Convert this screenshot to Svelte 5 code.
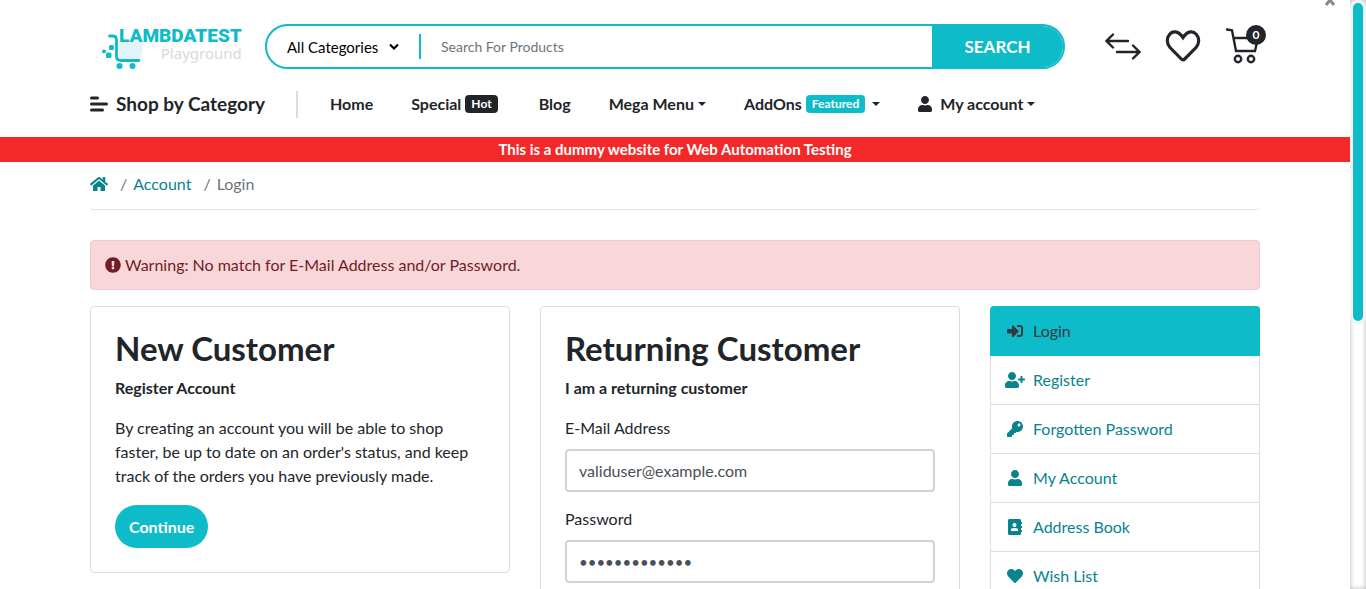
<script>
  const icons = {
    user: ['0 0 448 512', 'M224 256c70.7 0 128-57.3 128-128S294.7 0 224 0 96 57.3 96 128s57.3 128 128 128zm89.6 32h-16.7c-22.2 10.2-46.9 16-72.9 16s-50.6-5.8-72.9-16h-16.7C60.2 288 0 348.2 0 422.4V464c0 26.5 21.5 48 48 48h352c26.5 0 48-21.5 48-48v-41.6c0-74.2-60.2-134.4-134.4-134.4z'],
    userPlus: ['0 0 640 512', 'M624 208h-64v-64c0-8.8-7.2-16-16-16h-32c-8.8 0-16 7.2-16 16v64h-64c-8.8 0-16 7.2-16 16v32c0 8.8 7.2 16 16 16h64v64c0 8.8 7.2 16 16 16h32c8.8 0 16-7.2 16-16v-64h64c8.8 0 16-7.2 16-16v-32c0-8.8-7.2-16-16-16zm-400 48c70.7 0 128-57.3 128-128S294.7 0 224 0 96 57.3 96 128s57.3 128 128 128zm89.6 32h-16.7c-22.2 10.2-46.9 16-72.9 16s-50.6-5.8-72.9-16h-16.7C60.2 288 0 348.2 0 422.4V464c0 26.5 21.5 48 48 48h352c26.5 0 48-21.5 48-48v-41.6c0-74.2-60.2-134.4-134.4-134.4z'],
    key: ['0 0 512 512', 'M512 176.001C512 273.203 433.202 352 336 352c-11.22 0-22.19-1.062-32.827-3.069l-24.012 27.014A23.999 23.999 0 0 1 261.223 384H224v40c0 13.255-10.745 24-24 24h-40v40c0 13.255-10.745 24-24 24H24c-13.255 0-24-10.745-24-24v-78.059c0-6.365 2.529-12.47 7.029-16.971l161.802-161.802C163.108 213.814 160 195.271 160 176 160 78.798 238.797.001 335.999 0 433.488-.001 512 78.511 512 176.001zM336 128c0 26.51 21.49 48 48 48s48-21.49 48-48-21.49-48-48-48-48 21.49-48 48z'],
    signIn: ['0 0 512 512', 'M416 448h-84c-6.6 0-12-5.4-12-12v-40c0-6.6 5.4-12 12-12h84c17.7 0 32-14.3 32-32V160c0-17.7-14.3-32-32-32h-84c-6.6 0-12-5.4-12-12V76c0-6.6 5.4-12 12-12h84c53 0 96 43 96 96v192c0 53-43 96-96 96zm-47-201L201 79c-15-15-41-4.5-41 17v96H24c-13.3 0-24 10.7-24 24v96c0 13.3 10.7 24 24 24h136v96c0 21.5 26 32 41 17l168-168c9.3-9.4 9.3-24.6 0-34z'],
    book: ['0 0 448 512', 'M436 160c6.6 0 12-5.4 12-12v-40c0-6.6-5.4-12-12-12h-20V48c0-26.5-21.5-48-48-48H48C21.5 0 0 21.5 0 48v416c0 26.5 21.5 48 48 48h320c26.5 0 48-21.5 48-48v-48h20c6.6 0 12-5.4 12-12v-40c0-6.6-5.4-12-12-12h-20v-64h20c6.6 0 12-5.4 12-12v-40c0-6.6-5.4-12-12-12h-20v-64h20zm-228-32c35.3 0 64 28.7 64 64s-28.7 64-64 64-64-28.7-64-64 28.7-64 64-64zm112 236.8c0 10.6-10 19.2-22.4 19.2H118.4C106 384 96 375.4 96 364.8v-19.2c0-31.8 30.1-57.6 67.2-57.6h5c12.3 5.1 25.7 8 39.8 8s27.6-2.9 39.8-8h5c37.1 0 67.2 25.8 67.2 57.6v19.2z'],
    heart: ['0 0 512 512', 'M462.3 62.6C407.5 15.9 326 24.3 275.7 76.2L256 96.5l-19.7-20.3C186.1 24.3 104.5 15.9 49.7 62.6c-62.8 53.6-66.1 149.8-9.9 207.9l193.5 199.8c12.5 12.9 32.8 12.9 45.3 0l193.5-199.8c56.3-58.1 53-154.3-9.8-207.9z'],
    home: ['0 0 576 512', 'M280.37 148.26L96 300.11V464a16 16 0 0 0 16 16l112.06-.29a16 16 0 0 0 15.92-16V368a16 16 0 0 1 16-16h64a16 16 0 0 1 16 16v95.64a16 16 0 0 0 16 16.05L464 480a16 16 0 0 0 16-16V300L295.67 148.26a12.19 12.19 0 0 0-15.3 0zM571.6 251.47L488 182.56V44.05a12 12 0 0 0-12-12h-56a12 12 0 0 0-12 12v72.61L318.47 43a48 48 0 0 0-61 0L4.34 251.47a12 12 0 0 0-1.6 16.9l25.5 31A12 12 0 0 0 45.15 301l235.22-193.74a12.19 12.19 0 0 1 15.3 0L530.9 301a12 12 0 0 0 16.9-1.6l25.5-31a12 12 0 0 0-1.7-16.93z'],
    warning: ['0 0 512 512', 'M504 256c0 136.997-111.043 248-248 248S8 392.997 8 256C8 119.083 119.043 8 256 8s248 111.083 248 248zm-248 50c-25.405 0-46 20.595-46 46s20.595 46 46 46 46-20.595 46-46-20.595-46-46-46zm-43.673-165.346l7.418 136c.347 6.364 5.609 11.346 11.982 11.346h48.546c6.373 0 11.635-4.982 11.982-11.346l7.418-136c.375-6.874-5.098-12.654-11.982-12.654h-63.383c-6.884 0-12.356 5.78-11.981 12.654z']
  };

  const links = [
    ['Login', 'signIn'],
    ['Register', 'userPlus'],
    ['Forgotten Password', 'key'],
    ['My Account', 'user'],
    ['Address Book', 'book'],
    ['Wish List', 'heart']
  ];

  const nav = [
    { text: 'Home' },
    { text: 'Special', badge: 'Hot', dark: true },
    { text: 'Blog' },
    { text: 'Mega Menu', caret: true },
    { text: 'AddOns', badge: 'Featured', caret: true },
    { text: 'My account', icon: 'user', caret: true }
  ];

  let email = $state('validuser@example.com');
  let password = $state('validpassword');
  let query = $state('');
</script>

{#snippet icon(name)}
  <svg class="icon" viewBox={icons[name][0]} aria-hidden="true"><path d={icons[name][1]} /></svg>
{/snippet}

<div class="shell">
  <div class="page">
    <button class="close" aria-label="Close">
      <svg viewBox="0 0 12 12" width="12" height="12" aria-hidden="true"><path d="M2 1l8 10M10 1L2 11" /></svg>
    </button>

    <header class="container">
      <div class="top">
        <a class="logo" href="#home">
          <svg class="cart-mark" viewBox="0 0 43 48" aria-hidden="true">
            <path class="basket" d="M17 18.500h25l-3 17H19q-2 0-2-2z" />
            <path class="frame" d="M7.500 13h3q4 0 4 4v16q0 4.500 4.500 4.500H37" />
            <circle cx="17.500" cy="43" r="3" /><circle cx="30.500" cy="43" r="3" />
            <rect x="7" y="22" width="5" height="5" rx="1.500" />
            <rect x="4" y="29.500" width="5.500" height="5.500" rx="1.500" />
            <circle cx="2" cy="28.500" r="2" />
          </svg>
          <span class="wordmark"><b>LAMBDATEST</b><span>Playground</span></span>
        </a>

        <form class="search" onsubmit={(e) => e.preventDefault()}>
          <div class="category">
            <select aria-label="Category"><option>All Categories</option></select>
            <svg viewBox="0 0 10 7" width="10" height="7" aria-hidden="true"><path d="M1 1.500L5 5.500l4-4" /></svg>
          </div>
          <input aria-label="Search For Products" placeholder="Search For Products" bind:value={query} />
          <button type="submit">SEARCH</button>
        </form>

        <div class="tools">
          <a href="#compare" aria-label="Compare">
            <svg viewBox="0 0 36 40" width="36" height="40" aria-hidden="true"><path d="M8 9.500L1.500 16 8 22.500M2 16H23M28 20.500l6.500 6.500-6.500 6.500M34 27H12" /></svg>
          </a>
          <a href="#wishlist" aria-label="Wish list">
            <svg class="heart" viewBox="0 0 36 40" width="36" height="40" aria-hidden="true"><path d="M18 12.500C13 5 7 6 4.500 9.500c-3 3.500-3 9 .5 13L16.300 34q1.700 1.700 3.400 0L31 22.500c3.500-4 3.500-9.500 .5-13C28.500 6 23 5 18 12.500z" /></svg>
          </a>
          <a class="cart" href="#cart" aria-label="Cart">
            <svg viewBox="0 0 41 40" width="41" height="40" aria-hidden="true"><path d="M2 4.500l5 .8 4 20.700h19l3-13H8.500" /><circle cx="13" cy="34" r="3.200" /><circle cx="26" cy="34" r="3.200" /></svg>
            <span class="count">0</span>
          </a>
        </div>
      </div>

      <div class="menu">
        <button class="shop">
          <svg viewBox="0 0 18 18" width="18" height="18" aria-hidden="true"><path d="M1.500 3h6M1.500 9h15M1.500 15h11" /></svg>
          Shop by Category
        </button>
        <nav aria-label="Main">
          {#each nav as item}
            <a href="#nav">
              {#if item.icon}{@render icon(item.icon)}{/if}
              <span>{item.text}</span>
              {#if item.badge}<span class="badge" class:dark={item.dark}>{item.badge}</span>{/if}
              {#if item.caret}<i class="caret"></i>{/if}
            </a>
          {/each}
        </nav>
      </div>
    </header>

    <p class="notice">This is a dummy website for Web Automation Testing</p>

    <div class="container">
      <nav class="crumbs" aria-label="Breadcrumb">
        <a href="#home" aria-label="Home">{@render icon('home')}</a>
        <span class="slash">/</span><a href="#account">Account</a>
        <span class="slash">/</span><span>Login</span>
      </nav>

      <div class="alert" role="alert">{@render icon('warning')}<span>Warning: No match for E-Mail Address and/or Password.</span></div>

      <div class="columns">
        <section class="card">
          <h2>New Customer</h2>
          <p class="lead">Register Account</p>
          <p>By creating an account you will be able to shop faster, be up to date on an order's status, and keep track of the orders you have previously made.</p>
          <a class="continue" href="#register">Continue</a>
        </section>

        <section class="card">
          <h2>Returning Customer</h2>
          <p class="lead">I am a returning customer</p>
          <form onsubmit={(e) => e.preventDefault()}>
            <label for="email">E-Mail Address</label>
            <input id="email" type="email" bind:value={email} />
            <label for="password">Password</label>
            <input id="password" type="password" bind:value={password} />
            <a class="forgot" href="#forgotten">Forgotten Password</a>
          </form>
        </section>

        <aside>
          {#each links as [text, name], i}
            <a href="#link" class:active={i === 0}><span class="slot">{@render icon(name)}</span>{text}</a>
          {/each}
        </aside>
      </div>
    </div>
  </div>
  <div class="track"><div class="thumb"></div></div>
</div>

<style>
  :global(body) {
    font-family: Lato, sans-serif;
    font-size: 16px;
    line-height: 24px;
    color: #212529;
    background: #fff;
  }
  * { box-sizing: border-box; }
  a { color: inherit; text-decoration: none; }
  p, h2 { margin: 0; }
  button, input, select { font: inherit; color: inherit; }
  .shell {
    display: grid;
    grid-template-columns: minmax(0, 1fr) 16px;
    height: 100vh;
    overflow: hidden;
  }
  .page { position: relative; overflow: hidden; }
  .container { max-width: 1170px; margin: 0 auto; }
  .icon { height: 16px; fill: currentColor; display: block; flex: none; }

  .track { box-shadow: inset 0 0 5px #b5b5b5; background: #fff; }
  .thumb {
    height: 55%;
    border: 3px solid #f3f3f3;
    border-radius: 8px;
    background: #0ebbc9;
  }
  .close {
    position: absolute;
    top: -6px;
    right: 14px;
    border: 0;
    padding: 0;
    background: none;
    display: flex;
  }
  .close path { fill: none; stroke: #7d8c8c; stroke-width: 3; }

  .top { display: flex; align-items: flex-start; height: 69px; padding-top: 24px; }
  .logo { display: flex; width: 175px; padding-left: 12px; flex: none; }
  .cart-mark { width: 43px; height: 48px; margin-top: -1px; fill: #0ebbc9; flex: none; }
  .basket { fill: #e3f3fb; }
  .frame { fill: none; stroke: #0ebbc9; stroke-width: 2.800; stroke-linecap: round; }
  .wordmark { margin-left: -26px; padding-top: 3px; display: flex; flex-direction: column; text-align: right; }
  .wordmark b { font: 900 19px/18px Roboto, sans-serif; color: #0ebbc9; }
  .wordmark span { font: 15px/16px "Noto Sans", sans-serif; color: #d9d9d9; }

  .search {
    display: flex;
    flex: 1;
    max-width: 800px;
    height: 45px;
    border: 2px solid #0ebbc9;
    border-radius: 23px;
    overflow: hidden;
    font-size: 14px;
  }
  .category {
    display: flex;
    align-items: center;
    width: 154px;
    margin: 8px 0;
    padding: 0 20px;
    border-right: 2px solid #0ebbc9;
    font-size: 15px;
    color: #000;
  }
  .category select {
    appearance: none;
    flex: 1;
    min-width: 0;
    border: 0;
    padding: 0;
    background: none;
    outline: none;
  }
  .category svg { fill: none; stroke: #000; stroke-width: 2.200; flex: none; }
  .search input { flex: 1; min-width: 0; border: 0; padding: 0 20px; outline: none; }
  .search input::placeholder { color: #6c757d; opacity: 1; }
  .search button {
    width: 131px;
    border: 0;
    background: #0ebbc9;
    color: #fff;
    font-size: 17px;
    font-weight: 700;
  }
  .tools { display: flex; gap: 24px; width: 155px; margin-left: auto; padding-top: 1px; }
  .tools a { position: relative; display: flex; flex: none; }
  .tools svg { fill: none; stroke: #212529; stroke-width: 2.400; stroke-linecap: round; }
  .tools .heart { stroke-width: 3.200; }
  .count {
    position: absolute;
    top: 0;
    right: 0;
    width: 20px;
    height: 20px;
    border-radius: 50%;
    background: #212529;
    color: #fff;
    font-size: 12px;
    line-height: 20px;
    font-weight: 700;
    text-align: center;
  }

  .menu { display: flex; align-items: center; height: 68px; padding-top: 2px; font-weight: 700; }
  .shop {
    display: flex;
    align-items: center;
    gap: 8px;
    width: 208px;
    height: 27px;
    padding: 0;
    border: 0;
    border-right: 2px solid #dcdcdc;
    background: none;
    font-size: 19px;
  }
  .shop path { stroke: #212529; stroke-width: 3; stroke-linecap: round; }
  .menu nav { display: flex; gap: 38px; padding-left: 32px; }
  .menu nav a { display: flex; align-items: center; gap: 4px; }
  .menu nav .icon { margin-right: 4px; }
  .badge {
    margin-right: 3px;
    padding: 0 6px;
    border-radius: 4px;
    background: #0ebbc9;
    color: #fff;
    font-size: 12px;
    line-height: 18px;
  }
  .dark { background: #212529; }
  .caret { border: 4px solid transparent; border-top-color: #212529; border-bottom: 0; }

  .notice {
    background: #f32929;
    color: #fff;
    font-size: 15px;
    font-weight: 700;
    line-height: 25px;
    text-align: center;
  }
  .crumbs {
    display: flex;
    align-items: center;
    height: 48px;
    padding-bottom: 3px;
    border-bottom: 1px solid #dee2e6;
    border-radius: 4px;
    color: #6c757d;
  }
  .crumbs a { color: #09838d; }
  .slash { margin: 0 6px 0 12px; }
  .alert {
    display: flex;
    align-items: center;
    gap: 4px;
    margin: 30px 0 16px;
    padding: 12px 14px;
    border: 1px solid #f5c6cb;
    border-radius: 4px;
    background: #f8d7da;
    color: #721c24;
  }
  .columns {
    display: grid;
    grid-template-columns: 14fr 14fr 9fr;
    gap: 30px;
    align-items: start;
  }
  .card { border: 1px solid #dedede; border-radius: 4px; padding: 24px; }
  h2 { font-size: 33px; line-height: 34px; font-weight: 700; }
  .lead { margin: 11px 0 16px; font-weight: 700; }
  .continue {
    display: inline-block;
    margin-top: 17px;
    padding: 9px 14px;
    border-radius: 22px;
    background: #0ebbc9;
    color: #fff;
    font-weight: 700;
    line-height: 25px;
  }
  label { display: block; margin-bottom: 9px; }
  .card input {
    display: block;
    width: 100%;
    height: 43px;
    padding: 0 12px;
    border: 2px solid #ced4da;
    border-radius: 4px;
    background: #fff;
    color: #495057;
    outline: none;
  }
  .card #email { margin-bottom: 15px; }
  .card #password { font-size: 15px; }
  .forgot { display: block; line-height: 22px; color: #09838d; }
  aside { border: 1px solid #dedede; border-top: 0; border-radius: 4px; }
  aside a {
    display: flex;
    align-items: center;
    height: 49px;
    padding-left: 14px;
    border-bottom: 1px solid #dedede;
    color: #09838d;
  }
  aside .active {
    height: 50px;
    margin: 0 -1px;
    padding-left: 15px;
    border-color: #0ebbc9;
    border-radius: 4px 4px 0 0;
    background: #0ebbc9;
    color: #343a40;
  }
  .slot { display: flex; justify-content: center; width: 20px; margin-right: 8px; }
</style>
